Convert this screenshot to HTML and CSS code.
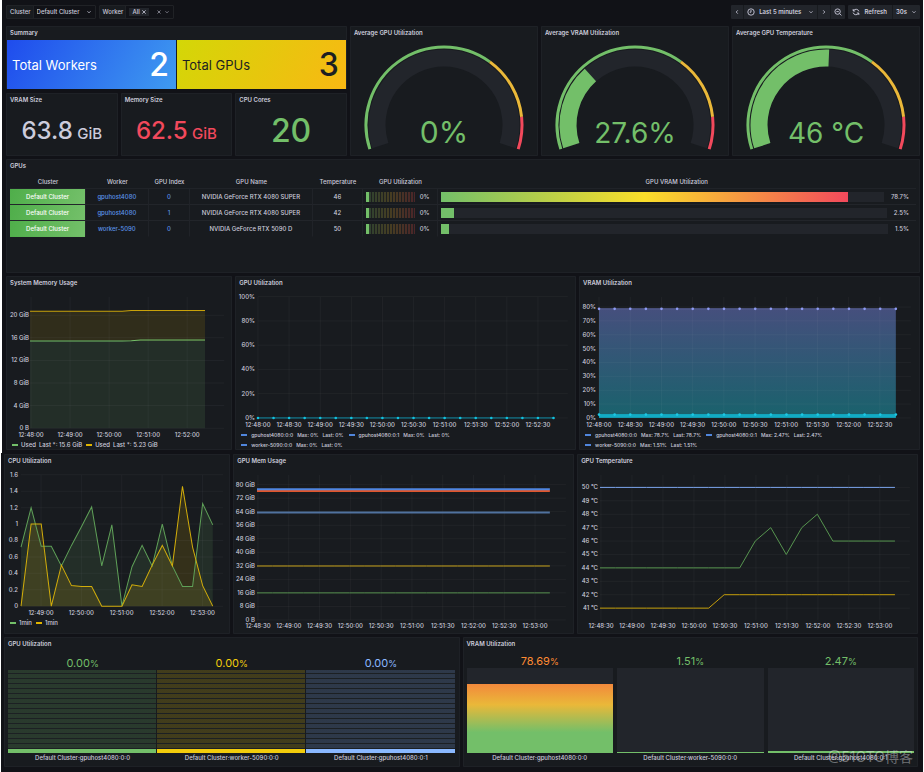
FILE: index.html
```html
<!DOCTYPE html>
<html lang="en">
<head>
<meta charset="utf-8">
<title>GPU Dashboard</title>
<link rel="stylesheet" href="styles.css">
</head>
<body>
<main class="screen">
<section class="board board-top">
  <header class="toolbar">
    <div class="field">
      <label class="field-label" for="cluster">Cluster</label>
      <span class="field-box">
        <select id="cluster" class="picker"><option>Default Cluster</option></select>
        <svg class="chev" viewBox="0 0 6 6"><path d="M1.5 2.3 3 3.8 4.5 2.3"/></svg>
      </span>
    </div>
    <div class="field">
      <span class="field-label">Worker</span>
      <span class="field-box field-multi">
        <button class="chip" type="button">All <svg class="chev" viewBox="0 0 6 6"><path d="M1.3 1.3 4.7 4.7M4.7 1.3 1.3 4.7"/></svg></button>
        <button class="clear" type="button" aria-label="Clear"><svg class="chev dim" viewBox="0 0 6 6"><path d="M1.5 1.5 4.5 4.5M4.5 1.5 1.5 4.5"/></svg></button>
        <svg class="chev dim" viewBox="0 0 6 6"><path d="M1.5 2.3 3 3.8 4.5 2.3"/></svg>
      </span>
    </div>
    <div class="spacer"></div>
    <div class="group">
      <button type="button" class="tool" aria-label="Back"><svg class="chev" viewBox="0 0 6 6"><path d="M3.8 1.3 2.2 3 3.8 4.7"/></svg></button>
      <button type="button" class="tool tool-range"><svg class="icon" viewBox="0 0 8 8"><circle cx="4" cy="4" r="3.2"/><path d="M4 2v2.2H2.7"/></svg>Last 5 minutes<svg class="chev push" viewBox="0 0 6 6"><path d="M1.5 2.3 3 3.8 4.5 2.3"/></svg></button>
      <button type="button" class="tool" aria-label="Forward"><svg class="chev" viewBox="0 0 6 6"><path d="M2.2 1.3 3.8 3 2.2 4.7"/></svg></button>
      <button type="button" class="tool" aria-label="Zoom out"><svg class="icon" viewBox="0 0 8 8"><circle cx="3.6" cy="3.6" r="2.7"/><path d="M5.6 5.6 7.4 7.4M2.4 3.6h2.4"/></svg></button>
    </div>
    <div class="group">
      <button type="button" class="tool tool-refresh"><svg class="icon" viewBox="0 0 8 8"><path d="M1.2 1v2h2M1.3 3A3 3 0 0 1 6.9 3.4M6.8 7V5h-2M6.7 5A3 3 0 0 1 1.1 4.6"/></svg>Refresh</button>
      <button type="button" class="tool">30s<svg class="chev" viewBox="0 0 6 6"><path d="M1.5 2.3 3 3.8 4.5 2.3"/></svg></button>
    </div>
  </header>

  <div class="grid">
    <div class="span9 overview">
      <article class="panel summary">
        <h2>Summary</h2>
        <div class="tiles">
          <div class="tile tile-blue"><span>Total Workers</span><b>2</b></div>
          <div class="tile tile-yellow"><span>Total GPUs</span><b>3</b></div>
        </div>
      </article>
      <article class="panel stat"><h2>VRAM Size</h2><p class="num">63.8 <small>GiB</small></p></article>
      <article class="panel stat"><h2>Memory Size</h2><p class="num red">62.5 <small>GiB</small></p></article>
      <article class="panel stat"><h2>CPU Cores</h2><p class="num big green">20</p></article>
    </div>
    <article class="panel span5"><h2>Average GPU Utilization</h2><svg class="gauge" data-value="0" data-text="0%" data-size="30"></svg></article>
    <article class="panel span5"><h2>Average VRAM Utilization</h2><svg class="gauge" data-value="27.6" data-text="27.6%" data-size="28"></svg></article>
    <article class="panel span5"><h2>Average GPU Temperature</h2><svg class="gauge" data-value="46" data-text="46 °C" data-size="28"></svg></article>

    <article class="panel span24 gpus">
      <h2>GPUs</h2>
      <table>
        <colgroup><col class="c1"><col class="c2"><col class="c3"><col class="c4"><col class="c5"><col class="c6"><col></colgroup>
        <thead><tr><th>Cluster</th><th>Worker</th><th>GPU Index</th><th>GPU Name</th><th>Temperature</th><th>GPU Utilization</th><th>GPU VRAM Utilization</th></tr></thead>
        <tbody>
          <tr><td class="cluster">Default Cluster</td><td><a href="#gpuhost4080">gpuhost4080</a></td><td><a href="#gpu0">0</a></td><td>NVIDIA GeForce RTX 4080 SUPER</td><td>46</td><td><div class="cell"><i class="led"></i>0%</div></td><td><div class="cell"><i class="track"><i class="fill hot" style="width:92%"></i></i><span>78.7%</span></div></td></tr>
          <tr><td class="cluster">Default Cluster</td><td><a href="#gpuhost4080">gpuhost4080</a></td><td><a href="#gpu1">1</a></td><td>NVIDIA GeForce RTX 4080 SUPER</td><td>42</td><td><div class="cell"><i class="led"></i>0%</div></td><td><div class="cell"><i class="track"><i class="fill" style="width:2.9%"></i></i><span>2.5%</span></div></td></tr>
          <tr><td class="cluster">Default Cluster</td><td><a href="#worker-5090">worker-5090</a></td><td><a href="#gpu0">0</a></td><td>NVIDIA GeForce RTX 5090 D</td><td>50</td><td><div class="cell"><i class="led"></i>0%</div></td><td><div class="cell"><i class="track"><i class="fill" style="width:1.8%"></i></i><span>1.5%</span></div></td></tr>
        </tbody>
      </table>
    </article>

    <article class="panel span6"><h2>System Memory Usage</h2><svg class="chart" id="sysmem"></svg>
      <ul class="legend"><li><i class="key k-green"></i>Used<span>Last *: 15.6 GiB</span></li><li><i class="key k-yellow"></i>Used<span>Last *: 5.23 GiB</span></li></ul>
    </article>
    <article class="panel span9"><h2>GPU Utilization</h2><svg class="chart" id="gpuutil"></svg>
      <ul class="legend compact"><li><i class="key k-blue"></i>gpuhost4080:0:0<span>Max: 0%</span><span>Last: 0%</span></li><li><i class="key k-blue"></i>gpuhost4080:0:1<span>Max: 0%</span><span>Last: 0%</span></li></ul>
      <ul class="legend compact"><li><i class="key k-blue"></i>worker-5090:0:0<span>Max: 0%</span><span>Last: 0%</span></li></ul>
    </article>
    <article class="panel span9"><h2>VRAM Utilization</h2><svg class="chart" id="vram"></svg>
      <ul class="legend compact"><li><i class="key k-blue"></i>gpuhost4080:0:0<span>Max: 78.7%</span><span>Last: 78.7%</span></li><li><i class="key k-blue"></i>gpuhost4080:0:1<span>Max: 2.47%</span><span>Last: 2.47%</span></li></ul>
      <ul class="legend compact"><li><i class="key k-blue"></i>worker-5090:0:0<span>Max: 1.51%</span><span>Last: 1.51%</span></li></ul>
    </article>
  </div>
</section>

<section class="board board-bottom">
  <div class="grid">
    <article class="panel span6"><h2>CPU Utilization</h2><svg class="chart" id="cpu"></svg>
      <ul class="legend"><li><i class="key k-green"></i>1min</li><li><i class="key k-yellow"></i>1min</li></ul>
    </article>
    <article class="panel span9"><h2>GPU Mem Usage</h2><svg class="chart" id="gpumem"></svg></article>
    <article class="panel span9"><h2>GPU Temperature</h2><svg class="chart" id="temp"></svg></article>

    <article class="panel span12"><h2>GPU Utilization</h2>
      <div class="bars bars-led">
        <figure class="green"><p>0.00<small>%</small></p><div class="leds"></div><figcaption>Default Cluster:gpuhost4080:0:0</figcaption></figure>
        <figure class="yellow"><p>0.00<small>%</small></p><div class="leds"></div><figcaption>Default Cluster:worker-5090:0:0</figcaption></figure>
        <figure class="blue"><p>0.00<small>%</small></p><div class="leds"></div><figcaption>Default Cluster:gpuhost4080:0:1</figcaption></figure>
      </div>
    </article>
    <article class="panel span12"><h2>VRAM Utilization</h2>
      <div class="bars bars-fill">
        <figure class="orange"><p>78.69<small>%</small></p><div class="well"><i class="level level-hot" style="height:81%"></i></div><figcaption>Default Cluster:gpuhost4080:0:0</figcaption></figure>
        <figure class="green"><p>1.51<small>%</small></p><div class="well"><i class="level" style="height:1.5%"></i></div><figcaption>Default Cluster:worker-5090:0:0</figcaption></figure>
        <figure class="green"><p>2.47<small>%</small></p><div class="well"><i class="level" style="height:2.5%"></i></div><figcaption>Default Cluster:gpuhost4080:0:1</figcaption></figure>
      </div>
    </article>
  </div>
  <span class="watermark">@51CTO博客</span>
</section>
</main>
<script src="charts.js"></script>
</body>
</html>
```
FILE: styles.css
```css
* { box-sizing: border-box; }
body {
  margin: 0;
  background: #fff;
  color: #ccccdc;
  font: 500 6px/8px Inter, "Noto Sans CJK SC", sans-serif;
}
h2, p, ul, figure { margin: 0; padding: 0; }
h2 { font-size: 6px; font-weight: 600; line-height: 14px; padding: 0 4px; }
button, select { font: inherit; color: inherit; border: 0; background: none; padding: 0; margin: 0; }
svg { display: block; }

.screen { min-height: 100vh; display: flex; flex-direction: column; }
.board { background: #111217; }
.board-top { margin: 0 1px 0 2px; padding: 0 3px 3px 4px; }
.board-bottom { margin: 0 1px; padding: 1px 5px 7px 3px; flex: 1; position: relative; }
.grid { display: grid; grid-template-columns: repeat(24, minmax(0, 1fr)); gap: 3px; }
.span5 { grid-column: span 5; }
.span6 { grid-column: span 6; }
.span9 { grid-column: span 9; }
.span12 { grid-column: span 12; }
.span24 { grid-column: span 24; }
.panel { background: #181b1f; box-shadow: inset 0 0 0 1px #1e2126; border-radius: 1px; }

.toolbar { display: flex; gap: 3px; padding: 5px 0 7px; }
.spacer { flex: 1; }
.field { display: flex; height: 14px; line-height: 12px; border: 1px solid #202226; border-radius: 1px; }
.field-label { background: #181b1f; padding: 0 2px 0 3px; border-right: 1px solid #202226; }
.field-box { display: flex; align-items: center; gap: 3px; padding: 0 3px; }
.field-multi { gap: 2px; }
.picker { appearance: none; font-size: 6px; width: 46px; }
.chip { display: flex; align-items: center; gap: 1px; height: 8px; padding: 0 2px 0 3px; background: #22252b; }
.clear { margin-left: 5px; }
.chev { width: 6px; height: 6px; fill: none; stroke: currentColor; stroke-width: .8; }
.dim { opacity: .7; }
.icon { width: 8px; height: 8px; fill: none; stroke: currentColor; stroke-width: .9; }
.push { margin-left: 3px; }
.group { display: flex; background: #22252b; border-radius: 1px; }
.tool { display: flex; align-items: center; gap: 4px; height: 14px; padding: 0 3px; font-weight: 600; }
.tool + .tool { border-left: 1px solid #181b1f; }
.tool-refresh { padding: 0 5px 0 4px; }

.overview { display: grid; grid-template-columns: repeat(3, minmax(0, 1fr)); grid-template-rows: auto 1fr; gap: 4px 3px; }
.summary { grid-column: span 3; }
.tiles { display: grid; grid-template-columns: 1fr 1fr; gap: 1px; padding: 0 1px; }
.tile { display: flex; align-items: center; justify-content: space-between; height: 49px; padding: 0 7px 0 5px; font-size: 13px; font-weight: 400; }
.tile b { font-size: 32px; font-weight: 500; }
.tile-blue { background: linear-gradient(120deg, #1f4ced, #3f9bf0); color: #fff; }
.tile-yellow { background: linear-gradient(120deg, #d3d707, #f9b813); color: #1d1f22; }
.num { font-size: 24px; line-height: 48px; text-align: center; white-space: nowrap; }
.num small { font-size: 15px; line-height: 1; margin-left: -2px; }
.num.big { font-size: 32px; }
.green { color: #73bf69; }
.yellow { color: #f2cc0c; }
.blue { color: #8ab8ff; }
.orange { color: #ff8b33; }
.red { color: #f2495c; }
.gauge { width: 100%; }
.chart { width: 100%; }

.gpus { min-height: 114px; }
.gpus table { width: calc(100% - 8px); margin: 2px 4px 0; border-collapse: separate; border-spacing: 0; table-layout: fixed; text-align: center; }
.gpus th { height: 14px; padding: 0; font-weight: 500; border-bottom: 1px solid #202328; }
.gpus td { height: 16px; padding: 0; border-bottom: 1px solid #22252a; border-right: 1px solid #202328; }
.gpus td:last-child { border-right: 0; }
.gpus tr:last-child td { border-bottom-color: transparent; }
.gpus a { color: #5b93ea; text-decoration: none; }
.gpus .cluster { color: #fff; background: linear-gradient(110deg, #4fae4a, #74c06a); }
.c1 { width: 8.4%; } .c2 { width: 6.9%; } .c3 { width: 4.6%; } .c4 { width: 13.5%; } .c5 { width: 5.6%; } .c6 { width: 8.2%; }
.cell { display: flex; align-items: center; justify-content: space-between; gap: 5px; padding: 0 7px 0 3px; }
.cell span { padding-left: 2px; }
.led {
  height: 10px; flex: 1;
  background:
    linear-gradient(90deg, #73bf69 3px, transparent 3px),
    repeating-linear-gradient(90deg, transparent 0 2px, #1f2021 2px 3px),
    linear-gradient(90deg, #2c4331, #463d22 50%, #4c2529);
}
.track { flex: 1; height: 10px; background: #22252b; }
.fill { display: block; height: 10px; background: #73bf69; }
.hot { background: linear-gradient(90deg, #73bf69, #fade2a 50%, #f2495c); }

.legend { display: flex; gap: 4px; list-style: none; padding: 0 6px; line-height: 10px; white-space: nowrap; }
.legend li { display: flex; align-items: center; gap: 3px; }
.key { width: 6px; height: 2px; }
.compact { font-size: 5px; gap: 5px; }
.compact li { gap: 4px; }
.k-green { background: #73bf69; }
.k-yellow { background: #e0b400; }
.k-blue { background: #5086dc; }

.bars { display: grid; grid-template-columns: repeat(3, minmax(0, 1fr)); padding: 0 4px 4px; text-align: center; }
.bars p { font-size: 11px; line-height: 12px; font-weight: 400; }
.bars small { font-size: 9px; }
.bars figcaption { color: #ccccdc; line-height: 10px; }
.bars-led { padding-top: 6px; }
.leds {
  height: 83px;
  background:
    repeating-linear-gradient(0deg, transparent 0 4px, #1c2023 4px 5px),
    linear-gradient(0deg, currentColor 4px, transparent 4px),
    linear-gradient(color-mix(in srgb, currentColor 19%, #181b1f) 0 0);
  border-right: 1px solid #181b1f;
}
.bars-fill { gap: 4px; padding-top: 4px; }
.well { height: 85px; display: flex; align-items: flex-end; background: #22252b; }
.level { width: 100%; background: #73bf69; }
.level-hot { background: linear-gradient(#f2893c, #eab839 30%, #73bf69 70%); }
.watermark { position: absolute; right: 10px; bottom: 8px; font-size: 14px; line-height: 18px; font-weight: 400; color: rgba(255, 255, 255, .38); }

.t { fill: #ccccdc; }
.t-x { text-anchor: middle; }
.t-y { text-anchor: end; }
.g { stroke: #ccccdc; stroke-opacity: .05; stroke-width: 1; fill: none; }
.val { text-anchor: middle; fill: #73bf69; font-weight: 400; }
```
FILE: charts.js
```js
const GREEN = '#73bf69', YELLOW = '#e0b400';

// Coordinates are relative to the panel; the 14 units on top belong to its title.
function draw(id, c) {
  const X = i => c.x0 + i * c.step;
  const Y = v => c.y0 - v * c.unit;
  let s = '<defs><linearGradient id="mix" x1="0" y1="0" x2="0" y2="1"><stop offset="0" stop-color="#454f7d"/><stop offset="1" stop-color="#19626c"/></linearGradient></defs>';
  for (const a of c.series) {
    if (!a.fill) continue;
    const pts = a.v.map((v, i) => X(i) + ',' + Y(v)).join(' ');
    const base = Y(a.base || 0);
    s += `<polygon points="${X(0)},${base} ${pts} ${X(a.v.length - 1)},${base}" fill="${a.fill}" fill-opacity="${a.alpha || .12}"/>`;
  }
  c.yt.forEach(([v, label]) => {
    s += `<path class="g" d="M${c.x0} ${Y(v)}H${c.right}"/><text class="t t-y" x="${c.lab}" y="${Y(v) + 2}">${label}</text>`;
  });
  c.xt.forEach((label, i) => {
    const x = c.tx + i * c.tstep;
    s += `<path class="g" d="M${x} ${c.top}V${c.bottom}"/><text class="t t-x" x="${x}" y="${c.xl}">${label}</text>`;
  });
  for (const a of c.series) {
    const pts = a.v.map((v, i) => X(i) + ',' + Y(v)).join(' ');
    s += `<polyline points="${pts}" fill="none" stroke="${a.color}" stroke-width="${a.w || 1}"/>`;
    if (a.dot) a.v.forEach((v, i) => { s += `<circle cx="${X(i)}" cy="${Y(v)}" r="1.3" fill="${a.dot}"/>`; });
  }
  const el = document.getElementById(id);
  el.setAttribute('viewBox', `0 14 ${c.w} ${c.h}`);
  el.innerHTML = s;
}

const flat = (v, n = 20) => Array(n).fill(v);
const ticks = (vals, unit) => vals.map(v => [v, v + unit]);
const half = ['12:48:00', '12:48:30', '12:49:00', '12:49:30', '12:50:00', '12:50:30', '12:51:00', '12:51:30', '12:52:00', '12:52:30', '12:53:00'];

draw('sysmem', {
  w: 226, h: 150, x0: 24, step: 9.2, y0: 152, unit: 5.64, right: 218, lab: 23, top: 21, bottom: 152, xl: 161,
  tx: 25, tstep: 39, xt: ['12:48:00', '12:49:00', '12:50:00', '12:51:00', '12:52:00'],
  yt: [[0, '0 B'], ...ticks([4, 8, 12, 16, 20], ' GiB')],
  series: [
    { v: [...flat(15.45, 11), 15.5, ...flat(15.6, 8)], color: GREEN, fill: GREEN },
    { v: [...flat(20.7, 11), ...flat(20.83, 9)], base: 15.5, color: '#c9a20a', fill: YELLOW }
  ]
});
draw('gpuutil', {
  w: 341, h: 140, x0: 23, step: 15.56, y0: 142, unit: 1.213, right: 333, lab: 20, top: 21, bottom: 142, xl: 151,
  tx: 23, tstep: 31.12, xt: half.slice(0, 10), yt: ticks([0, 20, 40, 60, 80, 100], '%'),
  series: [{ v: flat(0), color: '#0f8fa8', dot: '#12c2e0' }]
});
draw('vram', {
  w: 341, h: 140, x0: 20, step: 15.63, y0: 142, unit: 1.387, right: 332, lab: 17, top: 21, bottom: 142, xl: 151,
  tx: 20, tstep: 31.22, xt: half.slice(0, 10), yt: ticks([0, 10, 20, 30, 40, 50, 60, 70, 80], '%'),
  series: [
    { v: flat(78.7), color: '#5b639b', fill: 'url(#mix)', alpha: 1, dot: '#8f9cf5' },
    { v: flat(1.2), color: '#12abc4', w: 3 },
    { v: flat(2.4), color: '#12abc4', dot: '#1cc8e4' }
  ]
});
draw('cpu', {
  w: 226, h: 150, x0: 17, step: 10.08, y0: 152, unit: 82, right: 219, lab: 14, top: 21, bottom: 152, xl: 161,
  tx: 37, tstep: 40.3, xt: ['12:49:00', '12:50:00', '12:51:00', '12:52:00', '12:53:00'],
  yt: ticks([0, .2, .4, .6, .8, 1, 1.2, 1.4, 1.6], ''),
  series: [
    { v: [.72, 1.2, .73, .73, .49, .74, .97, 1.21, .49, .99, 0, .48, .74, .49, 1, .49, .24, .24, 1.25, .99], color: '#5fa058', fill: GREEN },
    { v: [0, 1, 1, 0, .5, .25, .24, .24, 0, 0, 0, .26, .24, .5, .74, .49, 1.46, .72, .25, 0], color: '#d2ad0b', fill: YELLOW, alpha: .14 }
  ]
});
draw('gpumem', {
  w: 341, h: 166, x0: 24, step: 15.42, y0: 166, unit: 1.692, right: 333, lab: 22, top: 21, bottom: 166, xl: 174,
  tx: 25, tstep: 30.8, xt: half.slice(1), yt: [[0, '0 B'], ...ticks([8, 16, 24, 32, 40, 48, 56, 64, 72, 80], ' GiB')],
  series: [
    { v: flat(76.2), color: '#e0562c', w: 2 }, { v: flat(77.2), color: '#4f86e0', w: 2 },
    { v: flat(63.5), color: '#50729f', w: 2 }, { v: flat(31.9), color: '#c9a51b' }, { v: flat(16), color: '#55914f' }
  ]
});
draw('temp', {
  w: 341, h: 166, x0: 23, step: 15.53, y0: 704.4, unit: 13.42, right: 333, lab: 21, top: 21, bottom: 166, xl: 174,
  tx: 24, tstep: 31, xt: half.slice(1), yt: ticks([41, 42, 43, 44, 45, 46, 47, 48, 49, 50], ' °C'),
  series: [
    { v: flat(50), color: '#7ba6ee' },
    { v: [...flat(44, 10), 46, 47, 45, 47, 48, ...flat(46, 5)], color: '#56954f' },
    { v: [...flat(41, 8), ...flat(42, 12)], color: '#c69f0a' }
  ]
});

// Gauges sweep 216 degrees over a range of 0 to 90.
document.querySelectorAll('.gauge').forEach(el => {
  const arc = (from, to, r, w, color) => {
    const p = v => {
      const a = (v / 90 * 216 - 108) * Math.PI / 180;
      return `${94 + r * Math.sin(a)} ${99 - r * Math.cos(a)}`;
    };
    const large = (to - from) / 90 * 216 > 180 ? 1 : 0;
    return `<path d="M${p(from)}A${r} ${r} 0 ${large} 1 ${p(to)}" fill="none" stroke="${color}" stroke-width="${w}"/>`;
  };
  const value = +el.dataset.value;
  el.setAttribute('viewBox', '0 14 188 116');
  el.innerHTML = arc(0, 90, 67, 17, '#22252b') + (value ? arc(0, value, 67, 17, GREEN) : '') +
    arc(0, 60, 78, 3, GREEN) + arc(60, 80, 78, 3, '#eab839') + arc(80, 90, 78, 3, '#f2495c') +
    `<text class="val" x="94" y="117" font-size="${el.dataset.size}">${el.dataset.text}</text>`;
});
```
